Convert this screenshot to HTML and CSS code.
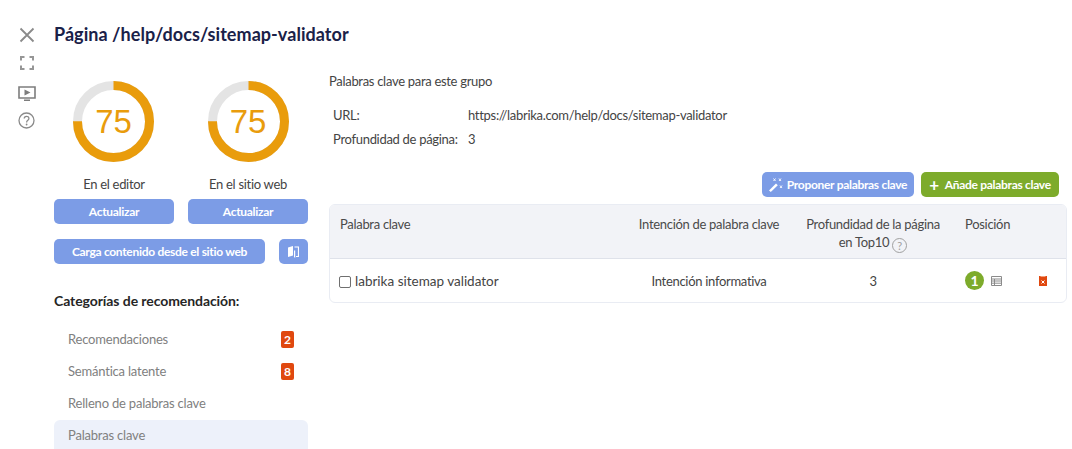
FILE: index.html
```html
<!DOCTYPE html>
<html lang="es">
<head>
<meta charset="utf-8">
<title>Página /help/docs/sitemap-validator</title>
<link rel="stylesheet" href="styles.css">
</head>
<body>
<div class="page">
  <nav class="rail">
    <svg class="rail-x" width="16" height="16" viewBox="0 0 16 16"><path d="M1.500 1.500l13 13M14.500 1.500l-13 13" stroke="#8a8a8a" stroke-width="1.800" fill="none"/></svg>
    <svg class="rail-full" width="14" height="14" viewBox="0 0 14 14"><path d="M1 4.500V1h3.500M9.500 1H13v3.500M13 9.500V13H9.500M4.500 13H1V9.500" stroke="#969696" stroke-width="2" fill="none"/></svg>
    <svg class="rail-play" width="18" height="15" viewBox="0 0 18 15"><path d="M1 1h16v11H1z" fill="none" stroke="#7d7d7d" stroke-width="1.600"/><path d="M6.500 3.500l6 3-6 3z" fill="#7d7d7d"/><path d="M6 13.500h6v1.500H6z" fill="#7d7d7d"/></svg>
    <svg class="rail-help" width="17" height="17" viewBox="0 0 17 17"><circle cx="8.500" cy="8.500" r="7.500" fill="none" stroke="#8a8a8a" stroke-width="1.300"/><path d="M6.200 6.600c0-3 4.700-3 4.700-.1 0 1.800-2.300 1.900-2.300 3.900" fill="none" stroke="#8a8a8a" stroke-width="1.300"/><circle cx="8.600" cy="12.500" r=".9" fill="#8a8a8a"/></svg>
  </nav>
  <main class="content">
    <h1 class="title">Página /help/docs/sitemap-validator</h1>
    <div class="columns">
      <aside class="side">
        <div class="scores">
          <div class="score">
            <div class="donut">
              <svg width="81" height="81" viewBox="0 0 81 81"><circle cx="40.500" cy="40.500" r="36" fill="none" stroke="#e4e4e4" stroke-width="9"/><circle cx="40.500" cy="40.500" r="36" fill="none" stroke="#e99c0c" stroke-width="9" stroke-dasharray="169.650 226.200" transform="rotate(-90 40.500 40.500)"/></svg>
              <span class="donut-num">75</span>
            </div>
            <div class="score-label">En el editor</div>
            <button class="btn btn-blue btn-wide">Actualizar</button>
          </div>
          <div class="score">
            <div class="donut">
              <svg width="81" height="81" viewBox="0 0 81 81"><circle cx="40.500" cy="40.500" r="36" fill="none" stroke="#e4e4e4" stroke-width="9"/><circle cx="40.500" cy="40.500" r="36" fill="none" stroke="#e99c0c" stroke-width="9" stroke-dasharray="169.650 226.200" transform="rotate(-90 40.500 40.500)"/></svg>
              <span class="donut-num">75</span>
            </div>
            <div class="score-label">En el sitio web</div>
            <button class="btn btn-blue btn-wide">Actualizar</button>
          </div>
        </div>
        <div class="load-row">
          <button class="btn btn-blue btn-load">Carga contenido desde el sitio web</button>
          <button class="btn btn-blue btn-icon" aria-label="Comparar">
            <svg width="11" height="12" viewBox="0 0 11 12"><path d="M0 1.500L5 0v9.500L0 11z" fill="#fff"/><path d="M6.500 1h4v9.500H8" fill="none" stroke="#fff" stroke-width="1.200"/><path d="M6 4.500h1.200V12L6 11z" fill="#fff"/></svg>
          </button>
        </div>
        <h2 class="cat-title">Categorías de recomendación:</h2>
        <ul class="cats">
          <li class="cat">Recomendaciones<span class="badge">2</span></li>
          <li class="cat">Semántica latente<span class="badge">8</span></li>
          <li class="cat">Relleno de palabras clave</li>
          <li class="cat cat-active">Palabras clave</li>
        </ul>
      </aside>
      <section class="detail">
        <p class="group">Palabras clave para este grupo</p>
        <dl class="meta">
          <dt>URL:</dt><dd>https://labrika.com/help/docs/sitemap-validator</dd>
          <dt>Profundidad de página:</dt><dd>3</dd>
        </dl>
        <div class="actions">
          <button class="btn btn-blue btn-propose">
            <svg width="15" height="14" viewBox="0 0 15 14"><path d="M0 12.500L7 5.500l1.800 1.800-7 6.700z" fill="#fff"/><path d="M4.500.5l2 2.500M6.500.5l-2 2.500M10 .5l2 2.500M12 .5L10 3M11 7.500l2 2.500M13 7.500L11 10" stroke="#fff" stroke-width=".9" fill="none"/></svg>
            Proponer palabras clave
          </button>
          <button class="btn btn-green btn-add"><span class="plus">+</span>Añade palabras clave</button>
        </div>
        <div class="table">
          <div class="tr th">
            <div class="c-key">Palabra clave</div>
            <div class="c-int">Intención de palabra clave</div>
            <div class="c-dep">Profundidad de la página<br>en Top10 <span class="q">?</span></div>
            <div class="c-pos">Posición</div>
            <div></div>
          </div>
          <div class="tr td">
            <div class="c-key"><span class="check"></span><span class="kw">labrika sitemap validator</span></div>
            <div class="c-int">Intención informativa</div>
            <div class="c-dep">3</div>
            <div class="c-pos">
              <span class="pos">1</span>
              <svg width="11" height="10" viewBox="0 0 11 10"><path d="M.5.5h10v9H.5zM.5 3h10M.5 5h10M.5 7.200h10M3.500 3v6.500" fill="none" stroke="#8b8b8b"/></svg>
            </div>
            <div class="c-del">
              <svg width="8" height="10" viewBox="0 0 8 10"><path d="M0 0h8v10H0z" fill="#e0480f"/><path d="M2.500 4.500l3 3M5.500 4.500l-3 3" stroke="#fff" stroke-width="1"/><path d="M1.500 0h5v1h-5z" fill="#f3a27f"/></svg>
            </div>
          </div>
        </div>
      </section>
    </div>
  </main>
</div>
</body>
</html>
```
FILE: styles.css
```css
* { box-sizing: border-box; }
html, body { margin: 0; padding: 0; }
body {
  width: 1072px;
  height: 449px;
  overflow: hidden;
  background: #fff;
  font-family: "Lato", "Noto Sans", sans-serif;
  font-size: 13px;
  letter-spacing: -0.3px;
  color: #3f3f3f;
}
.page { display: flex; height: 449px; overflow: hidden; }
.rail {
  width: 54px;
  flex: none;
  display: flex;
  flex-direction: column;
  align-items: center;
  padding: 27px 1px 0 0;
}
.rail svg { display: block; }
.rail-full { margin-top: 13px; }
.rail-play { margin-top: 16px; }
.rail-help { margin-top: 11px; }
.content { flex: 1; min-width: 0; padding-top: 23px; }
.title {
  margin: 0;
  font-size: 18px;
  line-height: 22px;
  font-weight: 700;
  letter-spacing: 0.05px;
  color: #1a2148;
}
.columns { display: flex; margin-top: 25px; }
.side { width: 254px; flex: none; }
.scores { display: flex; justify-content: space-between; padding-top: 11px; }
.score { width: 120px; display: flex; flex-direction: column; align-items: center; }
.score:first-child .donut { margin-right: 1px; }
.donut { position: relative; width: 81px; height: 81px; }
.donut svg { display: block; }
.donut-num {
  position: absolute;
  inset: 0;
  display: flex;
  align-items: center;
  justify-content: center;
  font-family: "Liberation Sans", sans-serif;
  font-size: 33px;
  letter-spacing: 0;
  color: #e99c0c;
}
.score-label { margin-top: 13px; line-height: 18px; color: #444; }
.btn {
  display: flex;
  align-items: center;
  justify-content: center;
  height: 25px;
  border: 0;
  border-radius: 5px;
  padding: 0;
  color: #fff;
  font-family: inherit;
  font-size: 12px;
  font-weight: 700;
  letter-spacing: -0.3px;
}
.btn-blue { background: #7c9ce6; }
.btn-green { background: #7dab2b; }
.btn-wide { width: 120px; margin-top: 6px; }
.load-row { display: flex; justify-content: space-between; margin-top: 15px; }
.btn-load { width: 211px; }
.btn-icon { width: 29px; }
.cat-title {
  margin: 27px 0 0;
  font-size: 14px;
  line-height: 20px;
  font-weight: 700;
  letter-spacing: -0.08px;
  color: #262626;
}
.cats { list-style: none; margin: 12px 0 0; padding: 0; }
.cat {
  display: flex;
  align-items: center;
  justify-content: space-between;
  height: 32px;
  padding: 0 14px;
  border-radius: 6px;
  letter-spacing: -0.2px;
  color: #808080;
}
.cat-active { background: #edf1fa; height: 40px; margin-top: 1px; padding-bottom: 10px; }
.badge {
  width: 13px;
  height: 17px;
  border-radius: 2px;
  background: #e0480f;
  color: #fff;
  font-size: 12px;
  font-weight: 700;
  display: flex;
  align-items: center;
  justify-content: center;
}
.detail { width: 738px; margin-left: 21px; flex: none; padding-top: 2px; }
.group { margin: 0; line-height: 18px; color: #444; }
.meta {
  display: grid;
  grid-template-columns: 135px auto;
  grid-auto-rows: 24px;
  align-items: center;
  margin: 13px 0 0;
  padding-left: 4px;
  color: #444;
}
.meta dt, .meta dd { margin: 0; }
.actions { display: flex; justify-content: flex-end; gap: 7px; margin: 21px 8px 0 0; }
.btn-propose { width: 152px; gap: 3px; }
.btn-add { width: 138px; }
.plus { font-size: 17px; line-height: 16px; margin-right: 6px; font-weight: 700; }
.table {
  margin-top: 7px;
  border: 1px solid #e9ecf3;
  border-radius: 6px;
  overflow: hidden;
}
.tr { display: grid; grid-template-columns: 300px 158px 170px 72px 36px; }
.th {
  height: 54px;
  background: #f2f3f7;
  border-bottom: 1px solid #dfe2ea;
  padding-top: 10px;
  line-height: 18px;
  color: #4a4a4a;
}
.td { height: 43px; align-items: center; color: #444; }
.c-key { padding-left: 10px; }
.td .c-key { display: flex; align-items: center; gap: 4px; }
.kw { font-size: 13.500px; letter-spacing: 0; }
.check {
  width: 12px;
  height: 12px;
  margin: 2px 0 0 -1px;
  border: 1px solid #6f6f6f;
  border-radius: 2px;
}
.c-int, .c-dep { text-align: center; }
.c-pos { padding-left: 7px; display: flex; align-items: flex-start; }
.td .c-pos { align-items: center; gap: 7px; }
.pos {
  width: 19px;
  height: 19px;
  border-radius: 50%;
  background: #7dab2b;
  color: #fff;
  font-size: 14px;
  font-weight: 700;
  display: flex;
  align-items: center;
  justify-content: center;
}
.c-del { padding-left: 9px; display: flex; }
.q {
  display: inline-block;
  width: 15px;
  height: 15px;
  line-height: 13px;
  border: 1px solid #a0a0a0;
  border-radius: 50%;
  font-size: 11px;
  letter-spacing: 0;
  text-align: center;
  color: #a0a0a0;
  vertical-align: -3px;
}
```
